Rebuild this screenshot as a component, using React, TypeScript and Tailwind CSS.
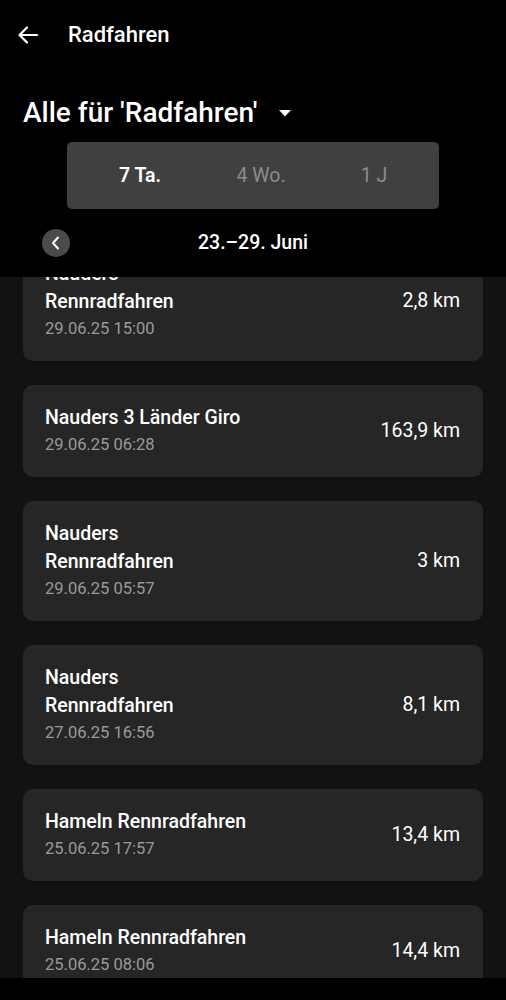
const rides = [
  { lines: ['Nauders', 'Rennradfahren'], date: '29.06.25 15:00', km: '2,8 km' },
  { lines: ['Nauders 3 Länder Giro'], date: '29.06.25 06:28', km: '163,9 km' },
  { lines: ['Nauders', 'Rennradfahren'], date: '29.06.25 05:57', km: '3 km' },
  { lines: ['Nauders', 'Rennradfahren'], date: '27.06.25 16:56', km: '8,1 km' },
  { lines: ['Hameln Rennradfahren'], date: '25.06.25 17:57', km: '13,4 km' },
  { lines: ['Hameln Rennradfahren'], date: '25.06.25 08:06', km: '14,4 km' },
];

export default function App() {
  return (
    <div
      className="flex flex-col h-[1000px] w-[506px] bg-black text-white overflow-hidden"
      style={{ fontFamily: 'Roboto, "Noto Sans", sans-serif' }}
    >
      {/* Header */}
      <header className="flex flex-col bg-black h-[277px] shrink-0">
        <div className="flex items-center h-[70px] pl-[16px]">
          <svg width="24" height="24" viewBox="0 0 24 24" fill="none" stroke="white" strokeWidth="2.2" strokeLinecap="round" strokeLinejoin="round">
            <path d="M21 12H3.5M11 4.5L3.5 12l7.5 7.5" />
          </svg>
          <span className="ml-[28px] text-[22px] font-medium leading-none">Radfahren</span>
        </div>

        <div className="flex items-center pl-[23px] mt-[27px] h-[32px]">
          <span className="text-[28px] font-medium leading-none">Alle für 'Radfahren'</span>
          <svg className="ml-[22px]" width="12" height="7" viewBox="0 0 12 7" fill="white">
            <path d="M0 0h12L6 6.5z" />
          </svg>
        </div>

        <div className="mt-[13px] ml-[67px] w-[372px] h-[67px] rounded-[5px] bg-[#404040] grid grid-cols-[146px_96px_130px] items-center text-[19.5px]">
          <span className="text-center font-semibold text-white">7 Ta.</span>
          <span className="text-center text-[#8c8c8c]">4 Wo.</span>
          <span className="text-center text-[#8c8c8c]">1 J</span>
        </div>

        <div className="relative flex items-center justify-center mt-[20px] h-[28px]">
          <div className="absolute left-[42px] w-[28px] h-[28px] rounded-full bg-[#4a4a4a] flex items-center justify-center">
            <svg width="10" height="14" viewBox="0 0 10 14" fill="none" stroke="white" strokeWidth="2" strokeLinecap="round" strokeLinejoin="round">
              <path d="M7 1.5L2 7l5 5.5" />
            </svg>
          </div>
          <span className="text-[19.5px] font-medium leading-none">23.–29. Juni</span>
        </div>
      </header>

      {/* List */}
      <main className="flex-1 bg-[#121212] overflow-hidden">
        <div className="flex flex-col gap-[24px] px-[23px] -mt-[36px]">
          {rides.map((r, i) => (
            <div key={i} className="flex items-center justify-between rounded-[10px] bg-[#262626] pl-[22px] pr-[23px] py-[19px]">
              <div className="flex flex-col">
                {r.lines.map((l, j) => (
                  <span key={j} className="text-[19.5px] font-medium leading-[28px] text-white">{l}</span>
                ))}
                <span className="text-[16.5px] leading-[26px] text-[#9a9a9a]">{r.date}</span>
              </div>
              <span className="text-[19.5px] leading-none text-white">{r.km}</span>
            </div>
          ))}
        </div>
      </main>

      <div className="h-[22px] bg-black shrink-0" />
    </div>
  );
}
